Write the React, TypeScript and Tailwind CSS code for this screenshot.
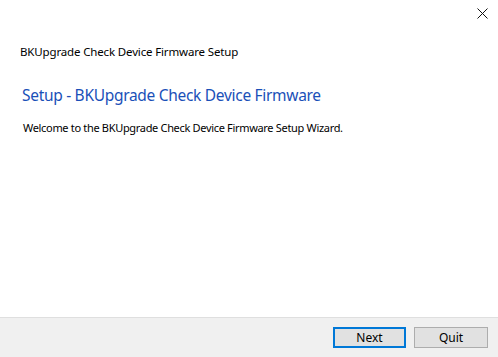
import React from 'react';

const App: React.FC = () => {
  return (
    <div
      className="w-[498px] h-[357px] bg-white flex flex-col text-black overflow-hidden"
      style={{ fontFamily: '"Noto Sans", "Open Sans", sans-serif' }}
    >
      {/* Title bar */}
      <div className="flex justify-end h-[26px] pr-[10px] pt-[8px]">
        <svg width="11" height="11" viewBox="0 0 11 11" className="block">
          <path d="M0.5 0.5 L10.5 10.5 M10.5 0.5 L0.5 10.5" stroke="#111" strokeWidth="1" fill="none" />
        </svg>
      </div>

      {/* Body */}
      <div className="flex-1 flex flex-col">
        <div className="pl-[20px] pt-[18px] text-[11.5px] leading-[16px] tracking-[-0.15px]">
          BKUpgrade Check Device Firmware Setup
        </div>
        <div className="pl-[22px] pt-[24px] text-[15.5px] leading-[22px] tracking-[-0.3px] text-[#1a50b8]">
          Setup - BKUpgrade Check Device Firmware
        </div>
        <div className="pl-[23px] pt-[14px] text-[11px] leading-[16px] tracking-[-0.32px]">
          Welcome to the BKUpgrade Check Device Firmware Setup Wizard.
        </div>
      </div>

      {/* Footer */}
      <div className="h-[40px] bg-[#f0f0f0] border-t border-[#dfdfdf] flex items-start justify-end gap-[8px] pr-[10px] pt-[9px]">
        <button className="w-[73px] h-[21px] bg-[#e1e1e1] border-2 border-[#0078d7] text-[12px] leading-none flex items-center justify-center">
          Next
        </button>
        <button className="w-[74px] h-[21px] bg-[#e1e1e1] border border-[#adadad] text-[12px] leading-none flex items-center justify-center">
          Quit
        </button>
      </div>
    </div>
  );
};

export default App;
